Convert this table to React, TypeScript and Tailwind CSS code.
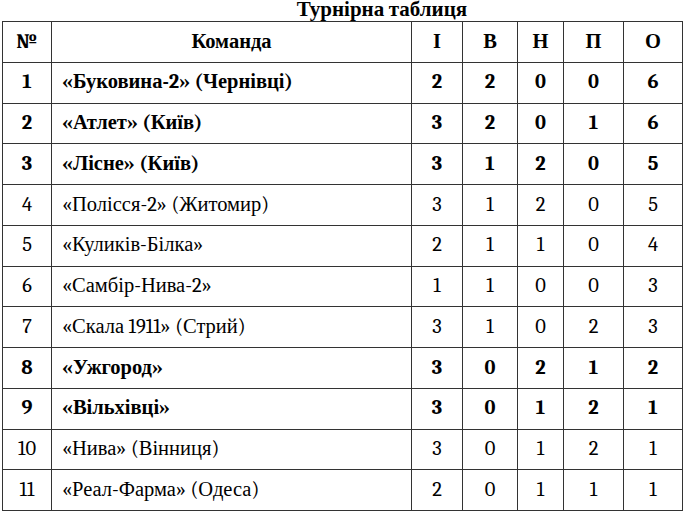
type Row = {
  pos: number
  team: string
  games: number
  wins: number
  draws: number
  losses: number
  points: number
  bold?: boolean
}

const rows: Row[] = [
  { pos: 1, team: "«Буковина-2» (Чернівці)", games: 2, wins: 2, draws: 0, losses: 0, points: 6, bold: true },
  { pos: 2, team: "«Атлет» (Київ)", games: 3, wins: 2, draws: 0, losses: 1, points: 6, bold: true },
  { pos: 3, team: "«Лісне» (Київ)", games: 3, wins: 1, draws: 2, losses: 0, points: 5, bold: true },
  { pos: 4, team: "«Полісся-2» (Житомир)", games: 3, wins: 1, draws: 2, losses: 0, points: 5 },
  { pos: 5, team: "«Куликів-Білка»", games: 2, wins: 1, draws: 1, losses: 0, points: 4 },
  { pos: 6, team: "«Самбір-Нива-2»", games: 1, wins: 1, draws: 0, losses: 0, points: 3 },
  { pos: 7, team: "«Скала 1911» (Стрий)", games: 3, wins: 1, draws: 0, losses: 2, points: 3 },
  { pos: 8, team: "«Ужгород»", games: 3, wins: 0, draws: 2, losses: 1, points: 2, bold: true },
  { pos: 9, team: "«Вільхівці»", games: 3, wins: 0, draws: 1, losses: 2, points: 1, bold: true },
  { pos: 10, team: "«Нива» (Вінниця)", games: 3, wins: 0, draws: 1, losses: 2, points: 1 },
  { pos: 11, team: "«Реал-Фарма» (Одеса)", games: 2, wins: 0, draws: 1, losses: 1, points: 1 },
]

const cell = "font-serif text-[20.5px] border border-[#333] h-[40.75px] p-0 align-middle"

export default function App() {
  return (
    <div className="bg-white min-h-[513px] text-black font-serif">
      <div className="font-serif h-[21px] pl-[76px] pt-[1px] text-center text-[21px] font-bold leading-[17px]">
        Турнірна таблиця
      </div>
      <table className="ml-[2px] w-[681px] table-fixed border-collapse">
        <colgroup>
          <col className="w-[49px]" />
          <col className="w-[360px]" />
          <col className="w-[51px]" />
          <col className="w-[55px]" />
          <col className="w-[46px]" />
          <col className="w-[60px]" />
          <col className="w-[59px]" />
        </colgroup>
        <thead>
          <tr>
            <th className={`${cell} font-bold text-center`}>№</th>
            <th className={`${cell} font-bold text-center`}>Команда</th>
            <th className={`${cell} font-bold text-center`}>І</th>
            <th className={`${cell} font-bold text-center`}>В</th>
            <th className={`${cell} font-bold text-center`}>Н</th>
            <th className={`${cell} font-bold text-center`}>П</th>
            <th className={`${cell} font-bold text-center`}>О</th>
          </tr>
        </thead>
        <tbody>
          {rows.map((r) => {
            const w = r.bold ? "font-bold" : "font-normal"
            return (
              <tr key={r.pos}>
                <td className={`${cell} ${w} text-center`}>{r.pos}</td>
                <td className={`${cell} ${w} text-left pl-[10px]`}>{r.team}</td>
                <td className={`${cell} ${w} text-center`}>{r.games}</td>
                <td className={`${cell} ${w} text-center`}>{r.wins}</td>
                <td className={`${cell} ${w} text-center`}>{r.draws}</td>
                <td className={`${cell} ${w} text-center`}>{r.losses}</td>
                <td className={`${cell} ${w} text-center`}>{r.points}</td>
              </tr>
            )
          })}
        </tbody>
      </table>
    </div>
  )
}
